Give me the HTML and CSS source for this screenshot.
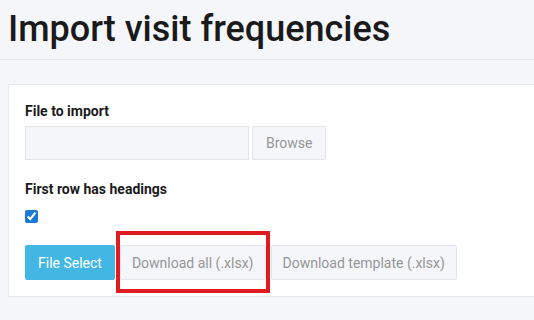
FILE: index.html
```html
<!DOCTYPE html>
<html lang="en">
<head>
    <meta charset="UTF-8">
    <meta name="viewport" content="width=device-width, initial-scale=1.0">
    <title>Import visit frequencies</title>
    <link rel="stylesheet" href="styles.css">
</head>
<body>
    <header class="page-header">
        <h1>Import visit frequencies</h1>
    </header>

    <main class="content">
        <form class="card">
            <label class="field-label">File to import</label>
            <div class="file-row">
                <input type="text" class="file-input" readonly>
                <button type="button" class="btn btn-light">Browse</button>
            </div>

            <label class="field-label headings-label">First row has headings</label>
            <input type="checkbox" class="check" checked>

            <div class="actions">
                <button type="button" class="btn btn-primary">File Select</button>
                <span class="highlight">
                    <button type="button" class="btn btn-light">Download all (.xlsx)</button>
                </span>
                <button type="button" class="btn btn-light">Download template (.xlsx)</button>
            </div>
        </form>
    </main>
</body>
</html>
```

FILE: styles.css
```css
html {
    overflow: hidden;
}

body {
    margin: 0;
    font-family: Roboto, "Liberation Sans", sans-serif;
    background-color: #f5f6fa;
    color: #1b1b1b;
}

.page-header {
    border-bottom: 1px solid #e2e4e9;
}

.page-header h1 {
    margin: 0;
    padding-left: 8px;
    font-size: 36px;
    font-weight: 500;
    line-height: 59px;
    color: #1a1a1a;
}

.content {
    padding: 24px 0 0 8px;
}

.card {
    width: 560px;
    background: #fff;
    border: 1px solid #e6e8ec;
    padding: 16px;
}

.field-label {
    display: block;
    font-size: 14px;
    font-weight: 700;
    line-height: 20px;
    margin-bottom: 5px;
}

.headings-label {
    margin-top: 19px;
    margin-bottom: 11px;
}

.file-row {
    display: flex;
    gap: 3px;
}

.file-input {
    width: 224px;
    height: 34px;
    box-sizing: border-box;
    border: 1px solid #e3e5ea;
    background: #f5f6fa;
    margin: 0;
}

.check {
    display: block;
    margin: 0;
    width: 13px;
    height: 13px;
    accent-color: #1a78d6;
}

.actions {
    display: flex;
    gap: 5px;
    margin-top: 22px;
}

.btn {
    height: 35px;
    padding: 0 12px;
    font-family: inherit;
    font-size: 14px;
    border-radius: 2px;
    cursor: pointer;
}

.btn-light {
    padding: 0 11px;
    background: #f5f6fa;
    border: 1px solid #e3e5ea;
    color: #969696;
}

.file-row .btn {
    height: 34px;
    padding: 0 13px;
}

.btn-primary {
    background: #42b7e3;
    border: 1px solid #42b7e3;
    color: #fff;
}

.highlight {
    position: relative;
    display: flex;
}

.highlight::after {
    content: "";
    position: absolute;
    left: -4px;
    right: -4px;
    top: -14px;
    bottom: -13px;
    border: 4px solid #e01b22;
    pointer-events: none;
}
```
